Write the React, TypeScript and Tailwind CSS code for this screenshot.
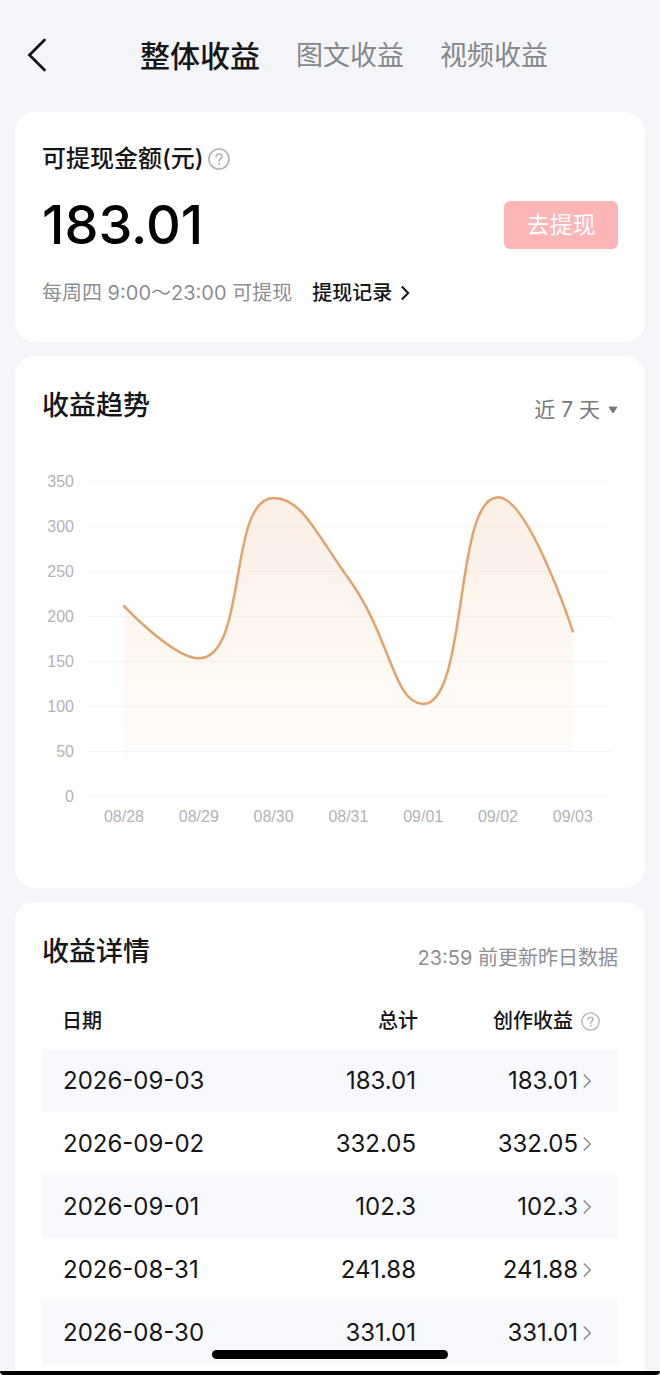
import { useState } from 'react';
import type { ReactNode } from 'react';

const tabs = ['整体收益', '图文收益', '视频收益'];

const trend = [
  { day: '08/28', value: 211 },
  { day: '08/29', value: 153 },
  { day: '08/30', value: 331.01 },
  { day: '08/31', value: 241.88 },
  { day: '09/01', value: 102.3 },
  { day: '09/02', value: 332.05 },
  { day: '09/03', value: 183.01 },
];

const rows = [
  { date: '2026-09-03', total: '183.01', creation: '183.01' },
  { date: '2026-09-02', total: '332.05', creation: '332.05' },
  { date: '2026-09-01', total: '102.3', creation: '102.3' },
  { date: '2026-08-31', total: '241.88', creation: '241.88' },
  { date: '2026-08-30', total: '331.01', creation: '331.01' },
];

const ticks = [350, 300, 250, 200, 150, 100, 50, 0];

type Point = { x: number; y: number };

const clamp = (v: number, a: number, b: number) =>
  Math.max(Math.min(a, b), Math.min(Math.max(a, b), v));

// Smooth line whose control points never leave the box between two neighbours
function smoothPath(pts: Point[]) {
  let d = `M${pts[0].x} ${pts[0].y}`;
  let out = pts[0];
  for (let i = 1; i < pts.length; i++) {
    const prev = pts[i - 1];
    const p = pts[i];
    const next = pts[i + 1];
    let cp = p;
    let nextOut = p;
    if (next) {
      const lenPrev = Math.hypot(p.x - prev.x, p.y - prev.y);
      const lenNext = Math.hypot(next.x - p.x, next.y - p.y);
      const k = (0.5 * lenNext) / (lenNext + lenPrev);
      const nx = clamp(p.x + (next.x - prev.x) * k, p.x, next.x);
      const ny = clamp(p.y + (next.y - prev.y) * k, p.y, next.y);
      const r = lenPrev / lenNext;
      cp = {
        x: clamp(p.x - (nx - p.x) * r, prev.x, p.x),
        y: clamp(p.y - (ny - p.y) * r, prev.y, p.y),
      };
      nextOut = { x: p.x + (p.x - cp.x) / r, y: p.y + (p.y - cp.y) / r };
    }
    d += `C${out.x} ${out.y} ${cp.x} ${cp.y} ${p.x} ${p.y}`;
    out = nextOut;
  }
  return d;
}

const toX = (i: number) => 82 + i * 74.8;
const toY = (v: number) => 336 - v * 0.9;

function HelpIcon({ className }: { className: string }) {
  return (
    <svg viewBox="0 0 22 22" fill="none" stroke="#b4b4b6" strokeWidth="1.6" strokeLinecap="round" className={className}>
      <circle cx="11" cy="11" r="10" />
      <path d="M8.1 8.8c0-1.7 1.3-2.8 3-2.8s2.9 1.1 2.9 2.6c0 2.1-2.9 2.3-2.9 4.4" />
      <circle cx="11.1" cy="15.9" r="0.5" fill="#b4b4b6" strokeWidth="1" />
    </svg>
  );
}

function Chevron({ className }: { className: string }) {
  return (
    <svg viewBox="0 0 10 16" fill="none" stroke="currentColor" className={className}>
      <path d="M1.8 1.5 8.2 8l-6.4 6.5" />
    </svg>
  );
}

function Card({ className, children }: { className: string; children: ReactNode }) {
  return <section className={`mx-[15px] rounded-[20px] bg-white px-[27px] ${className}`}>{children}</section>;
}

function TrendChart() {
  const pts = trend.map((t, i) => ({ x: toX(i), y: toY(t.value) }));
  const line = smoothPath(pts);
  return (
    <svg viewBox="0 0 576 380" className="mt-8 block w-full font-['Liberation_Sans',sans-serif]" role="img" aria-label="收益趋势">
      <defs>
        <linearGradient id="area" x1="0" y1="37" x2="0" y2="336" gradientUnits="userSpaceOnUse">
          <stop offset="0" stopColor="#fcefe7" />
          <stop offset="0.55" stopColor="#fef8f2" />
          <stop offset="1" stopColor="#ffffff" />
        </linearGradient>
      </defs>
      <path d={`${line}V336H${pts[0].x}Z`} fill="url(#area)" />
      {ticks.map(t => (
        <g key={t}>
          <path d={`M46 ${toY(t) + 0.5}H570`} stroke="#000000" strokeOpacity="0.03" />
          <text x="32" y={toY(t) + 6} textAnchor="end" fontSize="16" fill="#b3b3b5">{t}</text>
        </g>
      ))}
      <path d={line} fill="none" stroke="#e0a46c" strokeWidth="2.5" strokeLinecap="round" />
      {trend.map((t, i) => (
        <text key={t.day} x={toX(i)} y="362" textAnchor="middle" fontSize="16" fill="#b3b3b5">{t.day}</text>
      ))}
    </svg>
  );
}

export default function App() {
  const [tab, setTab] = useState(tabs[0]);

  return (
    <div className="flex min-h-screen flex-col bg-[#f3f5f8] font-['Inter','Noto_Sans_CJK_SC',sans-serif] text-[#161618]">
      {/* Header */}
      <header className="flex h-28 items-center">
        <button aria-label="返回" className="ml-6 flex h-10 w-10 items-center">
          <svg viewBox="0 0 26 36" fill="none" stroke="#161618" strokeWidth="2.8" strokeLinecap="round" className="h-9 w-[26px]">
            <path d="M20.5 2 5.5 17l15 15" />
          </svg>
        </button>
        <nav className="ml-[76px] flex items-center gap-9">
          {tabs.map(t => (
            <button
              key={t}
              onClick={() => setTab(t)}
              className={`leading-10 whitespace-nowrap ${
                t === tab ? 'text-[30px] font-medium' : 'text-[27px] text-[#86878b]'
              }`}
            >
              {t}
            </button>
          ))}
        </nav>
      </header>

      {/* Balance */}
      <Card className="pt-[31px] pb-[35px]">
        <div className="flex h-8 items-center gap-1">
          <h2 className="text-[24px] font-medium">可提现金额(元)</h2>
          <HelpIcon className="h-[22px] w-[22px]" />
        </div>
        <div className="mt-[26px] flex h-12 items-center justify-between">
          <div className="text-[54px] leading-[48px] font-medium text-black">183.01</div>
          <button className="h-12 w-[114px] rounded-md bg-[#feb5b5] text-[23px] text-white">去提现</button>
        </div>
        <div className="mt-[30px] flex h-7 items-center text-[20px] whitespace-nowrap">
          <span className="text-[#8e8f93]">每周四 9:00～23:00 可提现</span>
          <a href="#records" className="ml-5 flex items-center gap-2 font-medium">
            提现记录
            <Chevron className="h-4 w-[10px] stroke-2" />
          </a>
        </div>
      </Card>

      {/* Trend */}
      <Card className="mt-[14px] pt-7 pb-12">
        <div className="flex justify-between">
          <h2 className="text-[27px] leading-[44px] font-medium">收益趋势</h2>
          <label className="flex h-9 items-center gap-2 self-end text-[#77787c]">
            <select aria-label="时间范围" className="appearance-none bg-transparent text-right text-[21px] outline-none">
              <option>近 7 天</option>
            </select>
            <svg viewBox="0 0 10 8" className="h-2 w-[10px]">
              <path d="M1 1h8L5 7z" fill="#77787c" stroke="#77787c" strokeLinejoin="round" />
            </svg>
          </label>
        </div>
        <TrendChart />
      </Card>

      {/* Details */}
      <Card className="mt-[14px] flex-1 rounded-b-none pt-7">
        <div className="flex justify-between">
          <h2 className="text-[27px] leading-[44px] font-medium">收益详情</h2>
          <span className="self-end text-[20px] leading-8 text-[#8e8f93]">23:59 前更新昨日数据</span>
        </div>
        <table className="mt-[19px] w-full">
          <thead>
            <tr className="h-14 text-[20px]">
              <th className="pl-5 text-left font-medium">日期</th>
              <th className="text-right font-medium">总计</th>
              <th className="w-[200px] pr-[18px] font-medium">
                <div className="flex items-center justify-end gap-2">
                  创作收益
                  <HelpIcon className="h-[19px] w-[19px]" />
                </div>
              </th>
            </tr>
          </thead>
          <tbody>
            {rows.map(r => (
              <tr key={r.date} className="h-[63px] text-[24px] odd:bg-[#f8f9fc]">
                <td className="pl-[21px]">{r.date}</td>
                <td className="pr-0.5 text-right">{r.total}</td>
                <td className="pr-[26px]">
                  <a href={`#${r.date}`} className="flex items-center justify-end gap-1">
                    {r.creation}
                    <Chevron className="h-4 w-[10px] stroke-[1.6] text-[#8e8f93]" />
                  </a>
                </td>
              </tr>
            ))}
          </tbody>
        </table>
      </Card>

      {/* Home indicator */}
      <div className="fixed bottom-4 left-1/2 h-[9px] w-[236px] -translate-x-1/2 rounded-full bg-black" />
      <div className="h-1 rounded-b-sm bg-black" />
    </div>
  );
}
